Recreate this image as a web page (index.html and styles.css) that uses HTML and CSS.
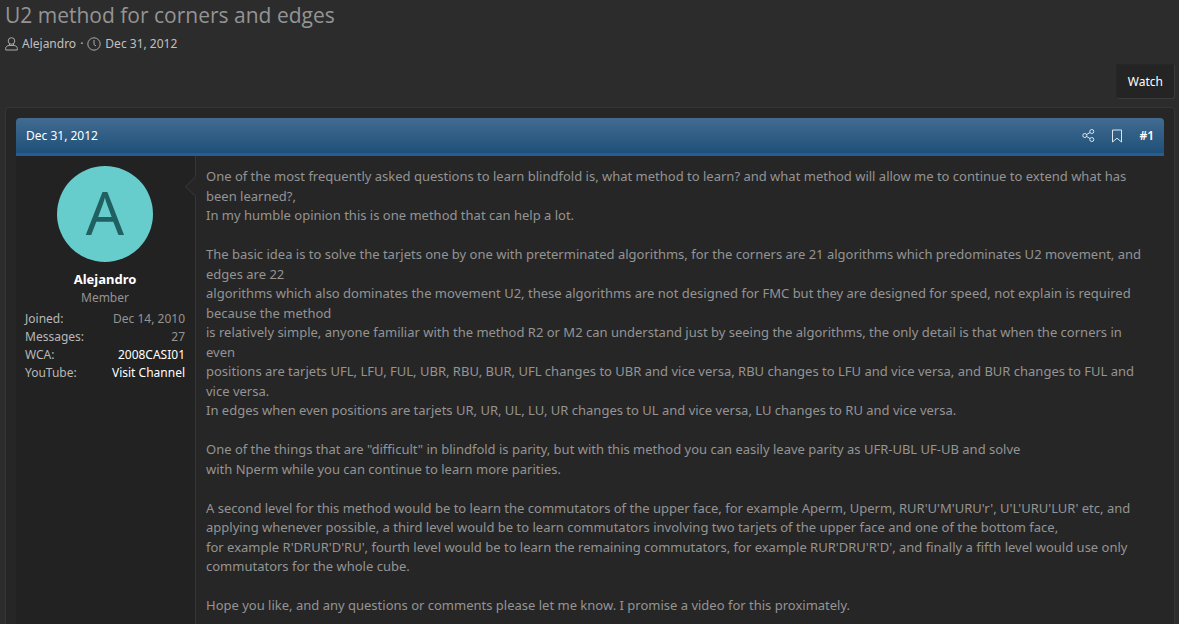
FILE: index.html
```html
<!DOCTYPE html>
<html lang="en">
<head>
<meta charset="utf-8">
<title>U2 method for corners and edges</title>
<link rel="stylesheet" href="styles.css">
</head>
<body>
<header class="page-header">
  <h1 class="page-title">U2 method for corners and edges</h1>
  <div class="byline">
    <svg class="byline-icon" viewBox="0 0 13 14" width="13" height="14" aria-hidden="true"><circle cx="6.5" cy="4" r="3.3"/><path d="M4.500 6.500v2M8.500 6.500v2M4.500 8.500C2 8.500 .7 9.700 .7 11.300v1.700h11.600v-1.700C12.300 9.700 11 8.500 8.500 8.500z"/></svg>
    <a href="#author">Alejandro</a>
    <span>·</span>
    <svg class="byline-icon" viewBox="0 0 14 14" width="14" height="14" aria-hidden="true"><circle cx="7" cy="7" r="6.200"/><path d="M7 3v4.500l2 1.500"/></svg>
    <a href="#post-1">Dec 31, 2012</a>
  </div>
</header>
<div class="actions"><button class="watch" type="button">Watch</button></div>
<main class="thread">
  <article class="post" id="post-1">
    <header class="post-header">
      <a href="#post-1">Dec 31, 2012</a>
      <nav class="post-tools">
        <a href="#share" aria-label="Share"><svg viewBox="0 0 13 13" width="13" height="13" aria-hidden="true"><circle cx="2.800" cy="6.500" r="2"/><circle cx="9.800" cy="2.500" r="2"/><circle cx="9.800" cy="10.500" r="2"/><path d="M4.600 5.500l3.500-2M4.600 7.500l3.500 2"/></svg></a>
        <a href="#bookmark" aria-label="Bookmark"><svg viewBox="0 0 12 14" width="12" height="14" aria-hidden="true"><path d="M1.500 1h9v12L6 9.200 1.500 13z"/></svg></a>
        <a href="#post-1">#1</a>
      </nav>
    </header>
    <div class="post-inner">
      <aside class="user" id="author">
        <div class="avatar">A</div>
        <a class="user-name" href="#author">Alejandro</a>
        <div class="user-title">Member</div>
        <dl class="stats">
          <div><dt>Joined:</dt><dd>Dec 14, 2010</dd></div>
          <div><dt>Messages:</dt><dd>27</dd></div>
          <div><dt>WCA:</dt><dd><a href="#wca">2008CASI01</a></dd></div>
          <div><dt>YouTube:</dt><dd><a href="#youtube">Visit Channel</a></dd></div>
        </dl>
      </aside>
      <div class="content">
        One of the most frequently asked questions to learn blindfold is, what method to learn? and what method will allow me to continue to extend what has been learned?,<br>
        In my humble opinion this is one method that can help a lot.<br>
        <br>
        The basic idea is to solve the tarjets one by one with preterminated algorithms, for the corners are 21 algorithms which predominates U2 movement, and edges are 22<br>
        algorithms which also dominates the movement U2, these algorithms are not designed for FMC but they are designed for speed, not explain is required because the method<br>
        is relatively simple, anyone familiar with the method R2 or M2 can understand just by seeing the algorithms, the only detail is that when the corners in even<br>
        positions are tarjets UFL, LFU, FUL, UBR, RBU, BUR, UFL changes to UBR and vice versa, RBU changes to LFU and vice versa, and BUR changes to FUL and vice versa.<br>
        In edges when even positions are tarjets UR, UR, UL, LU, UR changes to UL and vice versa, LU changes to RU and vice versa.<br>
        <br>
        One of the things that are "difficult" in blindfold is parity, but with this method you can easily leave parity as UFR-UBL UF-UB and solve<br>
        with Nperm while you can continue to learn more parities.<br>
        <br>
        A second level for this method would be to learn the commutators of the upper face, for example Aperm, Uperm, RUR'U'M'URU'r', U'L'URU'LUR' etc, and<br>
        applying whenever possible, a third level would be to learn commutators involving two tarjets of the upper face and one of the bottom face,<br>
        for example R'DRUR'D'RU', fourth level would be to learn the remaining commutators, for example RUR'DRU'R'D', and finally a fifth level would use only<br>
        commutators for the whole cube.<br>
        <br>
        Hope you like, and any questions or comments please let me know. I promise a video for this proximately.
      </div>
    </div>
  </article>
</main>
</body>
</html>
```

FILE: styles.css
```css
* { box-sizing: border-box; }
body {
  margin: 0;
  padding: 0 4px 0 5px;
  min-height: 100vh;
  display: flex;
  flex-direction: column;
  background: #2c2c2c;
  color: #949494;
  font: 13px/1.5 "Noto Sans", sans-serif;
}
a { color: inherit; text-decoration: none; }
svg { display: block; fill: none; stroke: currentColor; stroke-width: 1; }
.page-title { margin: 0; font-family: "Open Sans", sans-serif; font-size: 21px; font-weight: 400; line-height: 30px; }
.byline { display: flex; align-items: center; gap: 4px; height: 28px; font-size: 12px; color: #c0c0c0; }
.byline-icon { color: #aaa; }
.actions { display: flex; justify-content: flex-end; padding: 6px 0 8px; }
.watch {
  height: 35px;
  padding: 0 11px;
  border: 1px solid #262626;
  border-right-color: #3a3a3a;
  border-bottom-color: #3a3a3a;
  border-radius: 3px;
  background: #242424;
  color: #fff;
  font: inherit;
  font-size: 12px;
}
.thread {
  flex: 1;
  display: flex;
  flex-direction: column;
  padding: 10px 10px 0;
  border: 1px solid #363636;
  border-bottom: 0;
  border-radius: 4px 4px 0 0;
  background: #262626;
}
.post { flex: 1; display: flex; flex-direction: column; }
.post-header {
  display: flex;
  align-items: center;
  justify-content: space-between;
  height: 38px;
  padding: 0 10px;
  border-bottom: 3px solid #265d97;
  border-radius: 4px 4px 0 0;
  background: linear-gradient(#426b91, #1f5078);
  color: #fff;
  font-size: 12px;
}
.post-tools { display: flex; align-items: center; gap: 16px; font-weight: 600; }
.post-tools svg { color: #dce5ed; }
.post-inner { flex: 1; display: flex; }
.user {
  position: relative;
  flex: 0 0 180px;
  padding: 10px 10px 10px 9px;
  border-right: 1px solid #363636;
  background: #222;
  text-align: center;
  font-size: 12px;
}
.user::after {
  content: "";
  position: absolute;
  top: 23px;
  right: -8px;
  width: 14px;
  height: 14px;
  border-left: 1px solid #363636;
  border-bottom: 1px solid #363636;
  background: #262626;
  transform: rotate(45deg);
}
.avatar {
  width: 96px;
  height: 96px;
  margin: 0 auto 8px;
  border-radius: 50%;
  background: #66cccc;
  color: #206060;
  font: 60px/92px "Noto Sans", sans-serif;
}
.user-name { display: block; color: #fff; font-weight: 700; line-height: 18px; font-size: 13px; }
.user-title { line-height: 19px; }
.stats { margin: 3px 0 0; }
.stats div { display: flex; justify-content: space-between; line-height: 18px; }
.stats dt { color: #b8b8b8; }
.stats dd { margin: 0; }
.stats a { color: #fff; }
.content { flex: 1; min-width: 0; padding: 11px 12px 0 10px; }
```
